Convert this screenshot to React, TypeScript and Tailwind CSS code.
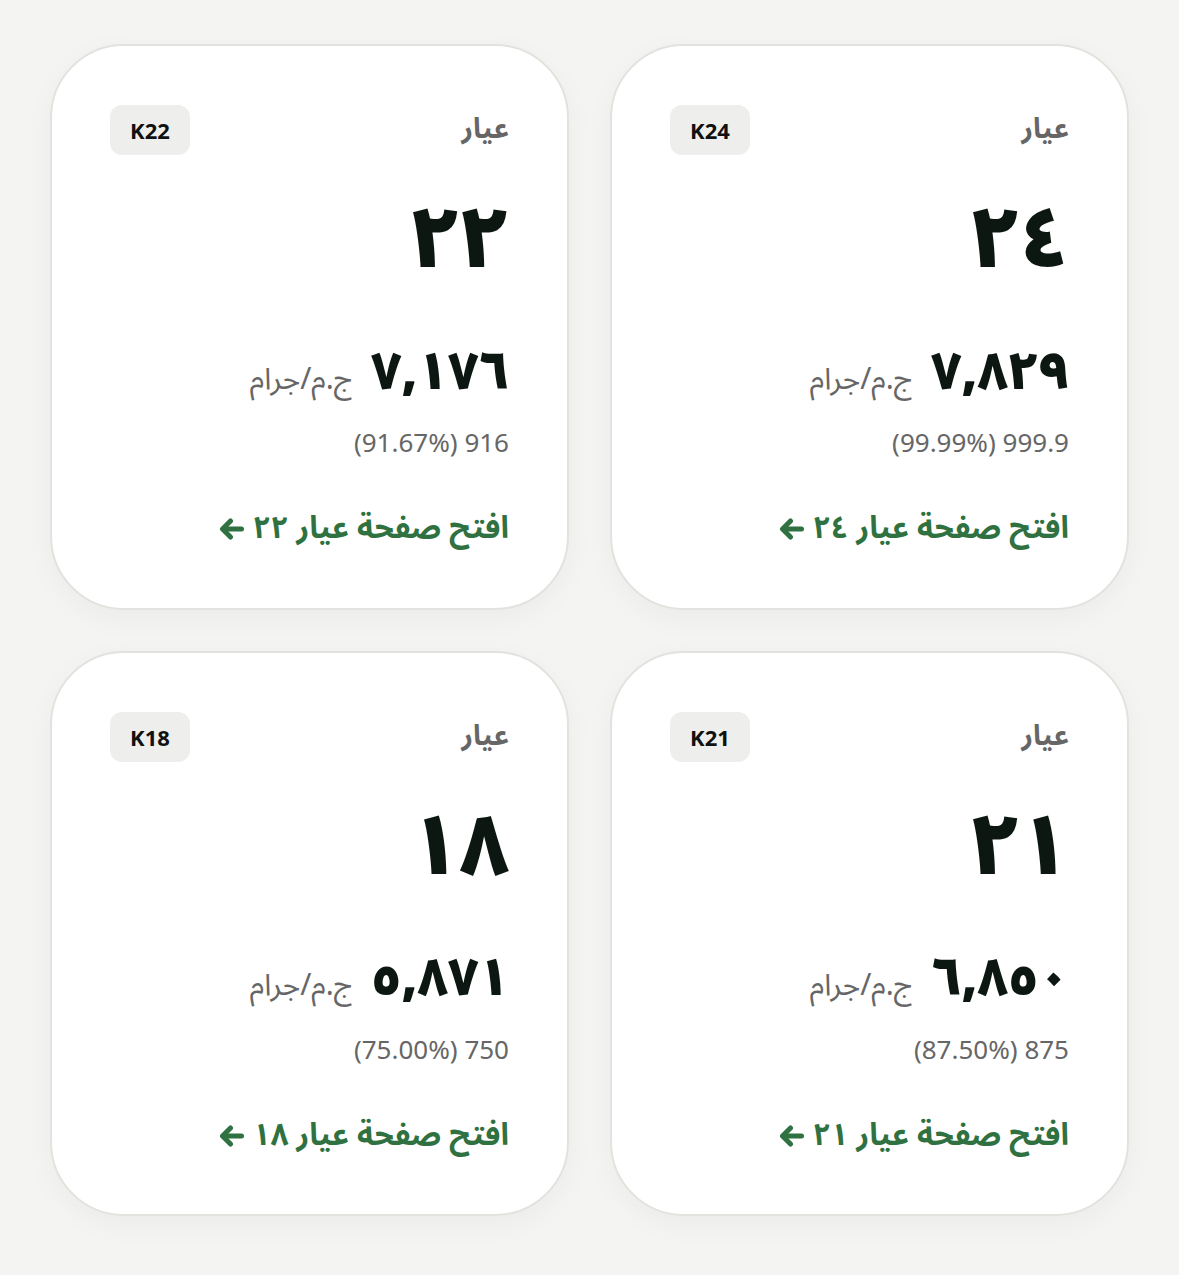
type Karat = {
  code: string;
  big: string;
  price: string;
  purity: string;
  link: string;
};

const karats: Karat[] = [
  { code: "K24", big: "٢٤", price: "٧,٨٢٩", purity: "999.9 (99.99%)", link: "افتح صفحة عيار ٢٤" },
  { code: "K22", big: "٢٢", price: "٧,١٧٦", purity: "916 (91.67%)", link: "افتح صفحة عيار ٢٢" },
  { code: "K21", big: "٢١", price: "٦,٨٥٠", purity: "875 (87.50%)", link: "افتح صفحة عيار ٢١" },
  { code: "K18", big: "١٨", price: "٥,٨٧١", purity: "750 (75.00%)", link: "افتح صفحة عيار ١٨" },
];

const arabic = { fontFamily: '"Noto Sans Arabic", "DejaVu Sans", "Noto Sans", sans-serif' };
const latin = { fontFamily: '"Noto Sans", "Open Sans", sans-serif' };

function ArrowLeft() {
  return (
    <svg width="25" height="22" viewBox="0 0 25 22" fill="none" className="shrink-0">
      <path d="M22.5 11H5" stroke="currentColor" strokeWidth="5" strokeLinecap="round" />
      <path d="M11.5 3L3.5 11l8 8" stroke="currentColor" strokeWidth="5" strokeLinecap="round" strokeLinejoin="round" />
    </svg>
  );
}

function KaratCard({ k }: { k: Karat }) {
  return (
    <div className="bg-white border-2 border-[#e2e3df] rounded-[74px] shadow-[0_8px_30px_rgba(0,0,0,0.04)] pt-[59px] pb-[60px] px-[58px] flex flex-col">
      {/* header */}
      <div className="flex items-center justify-between h-[50px]">
        <span className="text-[28px] font-bold text-[#666] leading-[1.2]" style={arabic}>
          عيار
        </span>
        <span
          className="w-[80px] h-[50px] rounded-[12px] bg-[#eeefec] flex items-center justify-center text-[22px] font-bold text-[#111] leading-none"
          style={latin}
          dir="ltr"
        >
          {k.code}
        </span>
      </div>

      <div className="mt-[36px] text-[84px] font-black text-[#0d1712] leading-[1.2]" style={arabic}>
        {k.big}
      </div>

      {/* price */}
      <div className="mt-[50px] flex items-baseline gap-[18px]" style={arabic}>
        <span className="text-[52px] font-black text-[#0d1712] leading-[1.2]">{k.price}</span>
        <span className="text-[30px] text-[#666] leading-[1.2]">ج.م/جرام</span>
      </div>

      <div className="mt-[23px] text-[26px] text-[#666] leading-[1.2]" style={latin}>
        {k.purity}
      </div>

      <a className="mt-[52px] flex items-center gap-[9px] text-[31px] font-bold text-[#2f7140] leading-[1.2]" style={arabic}>
        <span>{k.link}</span>
        <ArrowLeft />
      </a>
    </div>
  );
}

export default function App() {
  return (
    <div dir="rtl" className="min-h-[1275px] bg-[#f4f5f2] px-[50px] pt-[44px] pb-[56px]">
      <div className="grid grid-cols-2 gap-[41px]">
        {karats.map((k) => (
          <KaratCard key={k.code} k={k} />
        ))}
      </div>
    </div>
  );
}
